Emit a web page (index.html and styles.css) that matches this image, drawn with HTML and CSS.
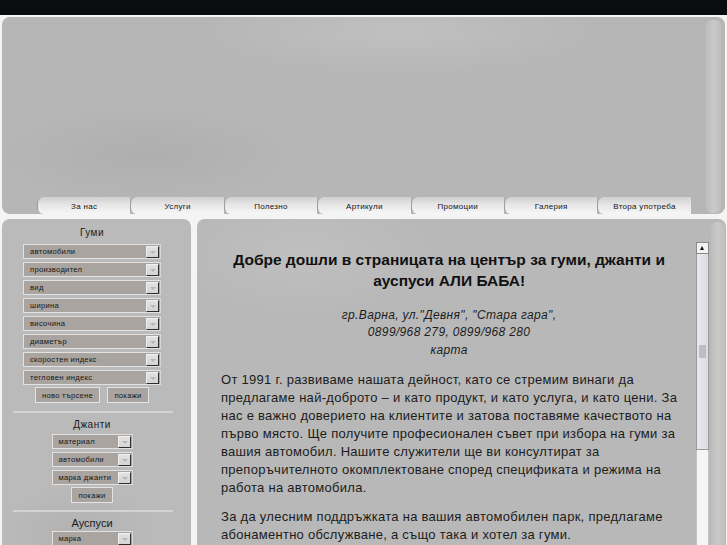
FILE: index.html
```html
<!DOCTYPE html>
<html lang="bg">
<head>
<meta charset="utf-8">
<title>АЛИ БАБА — гуми, джанти и ауспуси</title>
<link rel="stylesheet" href="styles.css">
</head>
<body>
<div class="topbar"></div>
<header class="header">
  <div class="header-main">
    <nav class="nav">
      <a class="tab">За нас</a>
      <a class="tab">Услуги</a>
      <a class="tab">Полезно</a>
      <a class="tab">Артикули</a>
      <a class="tab">Промоции</a>
      <a class="tab">Галерия</a>
      <a class="tab">Втора употреба</a>
    </nav>
  </div>
  <div class="strip"></div>
</header>
<div class="columns">
  <aside class="sidebar">
    <section class="filter filter-tyres">
      <h3 class="filter-title">Гуми</h3>
      <div class="select">автомобили<span class="arrow"></span></div>
      <div class="select">производител<span class="arrow"></span></div>
      <div class="select">вид<span class="arrow"></span></div>
      <div class="select">ширина<span class="arrow"></span></div>
      <div class="select">височина<span class="arrow"></span></div>
      <div class="select">диаметър<span class="arrow"></span></div>
      <div class="select">скоростен индекс<span class="arrow"></span></div>
      <div class="select">тегловен индекс<span class="arrow"></span></div>
      <div class="buttons">
        <span class="btn btn-wide">ново търсене</span>
        <span class="btn">покажи</span>
      </div>
    </section>
    <hr class="sep">
    <section class="filter filter-rims">
      <h3 class="filter-title">Джанти</h3>
      <div class="select select-small">материал<span class="arrow"></span></div>
      <div class="select select-small">автомобили<span class="arrow"></span></div>
      <div class="select select-small">марка джанти<span class="arrow"></span></div>
      <div class="buttons">
        <span class="btn">покажи</span>
      </div>
    </section>
    <hr class="sep sep-last">
    <section class="filter filter-exhaust">
      <h3 class="filter-title filter-title-big">Ауспуси</h3>
      <div class="select select-small">марка<span class="arrow"></span></div>
    </section>
  </aside>
  <main class="main">
    <div class="content">
      <h1 class="welcome">Добре дошли в страницата на център за гуми, джанти и<br>ауспуси АЛИ БАБА!</h1>
      <p class="address">гр.Варна, ул."Девня", "Стара гара",<br>0899/968 279, 0899/968 280<br>карта</p>
      <p class="text">От 1991 г. развиваме нашата дейност, като се стремим винаги да<br>предлагаме най-доброто – и като продукт, и като услуга, и като цени. За<br>нас е важно доверието на клиентите и затова поставяме качеството на<br>първо място. Ще получите професионален съвет при избора на гуми за<br>вашия автомобил. Нашите служители ще ви консултират за<br>препоръчителното окомплектоване според спецификата и режима на<br>работа на автомобила.</p>
      <p class="text">За да улесним поддръжката на вашия автомобилен парк, предлагаме<br>абонаментно обслужване, а също така и хотел за гуми.</p>
    </div>
    <div class="scrollbar">
      <div class="sb-up"></div>
      <div class="sb-thumb"><span class="sb-grip"></span></div>
      <div class="sb-track"></div>
    </div>
    <div class="strip strip-main"></div>
  </main>
</div>
</body>
</html>
```

FILE: styles.css
```css
* { box-sizing: border-box; }

html, body {
  margin: 0;
  padding: 0;
  height: 545px;
  overflow: hidden;
}

body {
  background: #f4f4f4;
  font-family: "Liberation Sans", Arial, sans-serif;
  color: #1a1a1a;
}

.topbar {
  height: 15px;
  background: #0b0c10;
  margin-bottom: 2px;
}

/* header */
.header {
  display: flex;
  height: 197px;
  margin: 0 2px 0 2px;
  border-radius: 8px;
  background:
    radial-gradient(ellipse 40% 30% at 55% 8%, rgba(200,200,200,0.55), rgba(200,200,200,0) 70%),
    radial-gradient(ellipse 30% 35% at 20% 70%, rgba(165,165,165,0.45), rgba(165,165,165,0) 70%),
    #b6b6b6;
  overflow: hidden;
}

.header-main {
  flex: 1;
  display: flex;
  flex-direction: column;
  justify-content: flex-end;
  padding-left: 35px;
}

.nav {
  display: flex;
  height: 17px;
}

.tab {
  width: 93.4px;
  height: 17px;
  display: flex;
  align-items: center;
  justify-content: center;
  font-size: 8px;
  letter-spacing: 0.3px;
  color: #141414;
  background: linear-gradient(#cfcfcf 0%, #e6e6e6 45%, #f6f6f6 100%);
  border-left: 1px solid #9c9c9c;
  border-radius: 6px 0 0 6px;
  padding-top: 1px;
}

.strip {
  width: 15px;
  margin: 3px 4px 1px 0;
  border-radius: 6px;
  background: linear-gradient(90deg, #bdbdbd, #c9c9c9 50%, #bfbfbf);
}

/* columns */
.columns {
  display: flex;
  gap: 6px;
  margin: 5px 3px 0 2px;
}

.sidebar {
  width: 189px;
  height: 340px;
  flex: none;
  border-radius: 8px;
  background:
    radial-gradient(ellipse 60% 20% at 40% 92%, rgba(170,170,170,0.5), rgba(170,170,170,0) 70%),
    #bababa;
  padding: 8px 30px 0 21px;
}

.filter {
  display: flex;
  flex-direction: column;
  align-items: center;
}

.filter-title {
  margin: 0 0 5px;
  font-size: 10px;
  line-height: 12px;
  font-weight: normal;
  letter-spacing: 0.5px;
  color: #1a1a1a;
}

.filter-title-big {
  font-size: 11px;
  letter-spacing: 0;
  margin-bottom: 2px;
}

.filter-rims .filter-title { margin-bottom: 3px; }

.select {
  width: 138px;
  height: 15px;
  margin-bottom: 3px;
  display: flex;
  align-items: center;
  justify-content: space-between;
  padding-left: 6px;
  font-size: 7.6px;
  letter-spacing: 0.3px;
  color: #161616;
  background: #a9a49f;
  border: 1px solid #e2e2e2;
  border-right-color: #d6d6d6;
}

.select-small { width: 81px; }

.arrow {
  position: relative;
  width: 13px;
  height: 12px;
  margin-right: 1px;
  background: linear-gradient(#e2e2e2, #d4d4d4);
  border-top: 1px solid #f2f2f2;
  border-left: 1px solid #eeeeee;
  border-right: 1px solid #2e2e2e;
  border-bottom: 1px solid #2e2e2e;
}

.arrow::after {
  content: "";
  position: absolute;
  left: 3px;
  top: 4px;
  border-left: 3px solid transparent;
  border-right: 3px solid transparent;
  border-top: 3px solid #b6b6b6;
}

.buttons {
  display: flex;
  gap: 7px;
  margin-top: -1px;
}

.btn {
  width: 42px;
  height: 16px;
  display: flex;
  align-items: center;
  justify-content: center;
  font-size: 7.6px;
  letter-spacing: 0.3px;
  color: #161616;
  background: #a9a49f;
  border: 1px solid #e4e4e4;
}

.btn-wide { width: 65px; }

.filter-rims .buttons { margin-top: -1px; }

.sep {
  border: 0;
  height: 2px;
  background: #d3d3d3;
  margin: 8px -12px 6px -10px;
}

.sep-last { margin: 7px -12px 5px -10px; }

/* main */
.main {
  flex: 1;
  height: 340px;
  display: flex;
  border-radius: 8px;
  background:
    radial-gradient(ellipse 35% 25% at 20% 10%, rgba(196,196,196,0.6), rgba(196,196,196,0) 70%),
    #b8b8b8;
}

.content {
  flex: 1;
  padding: 30px 19px 0 24px;
  color: #1a1a1a;
}

.welcome {
  margin: 0;
  text-align: center;
  font-size: 15.5px;
  line-height: 21px;
  font-weight: bold;
  color: #111;
}

.address {
  margin: 15.5px 0 0;
  text-align: center;
  font-style: italic;
  font-size: 12px;
  letter-spacing: 0.35px;
  line-height: 17.5px;
  color: #1c1c1c;
}

.text {
  margin: 11.5px 0 0;
  font-size: 13px;
  letter-spacing: 0.28px;
  line-height: 18px;
  white-space: nowrap;
  color: #1c1c1c;
}

.text + .text { margin-top: 11px; }

.scrollbar {
  width: 13px;
  margin-top: 23px;
  display: flex;
  flex-direction: column;
}

.sb-up {
  height: 12px;
  background: #f2f2f4;
  border: 1px solid #8a8a8a;
  position: relative;
}

.sb-up::after {
  content: "";
  position: absolute;
  left: 3px;
  top: 3px;
  border-left: 2.5px solid transparent;
  border-right: 2.5px solid transparent;
  border-bottom: 4px solid #111;
}

.sb-thumb {
  height: 196px;
  background: linear-gradient(90deg, #e8e9ee, #dcdde3);
  border: 1px solid #9a9a9a;
  border-top: 0;
  display: flex;
  align-items: center;
  justify-content: center;
}

.sb-grip {
  width: 7px;
  height: 13px;
  background-image: radial-gradient(circle, #a8a8ae 0.6px, transparent 0.9px);
  background-size: 2px 2px;
}

.sb-track {
  flex: 1;
  background: #f4f5f8;
  border-left: 1px solid #c4c4c4;
  border-right: 1px solid #c4c4c4;
}

.strip-main {
  width: 14px;
  margin: 3px 1px 0 2px;
}
```
